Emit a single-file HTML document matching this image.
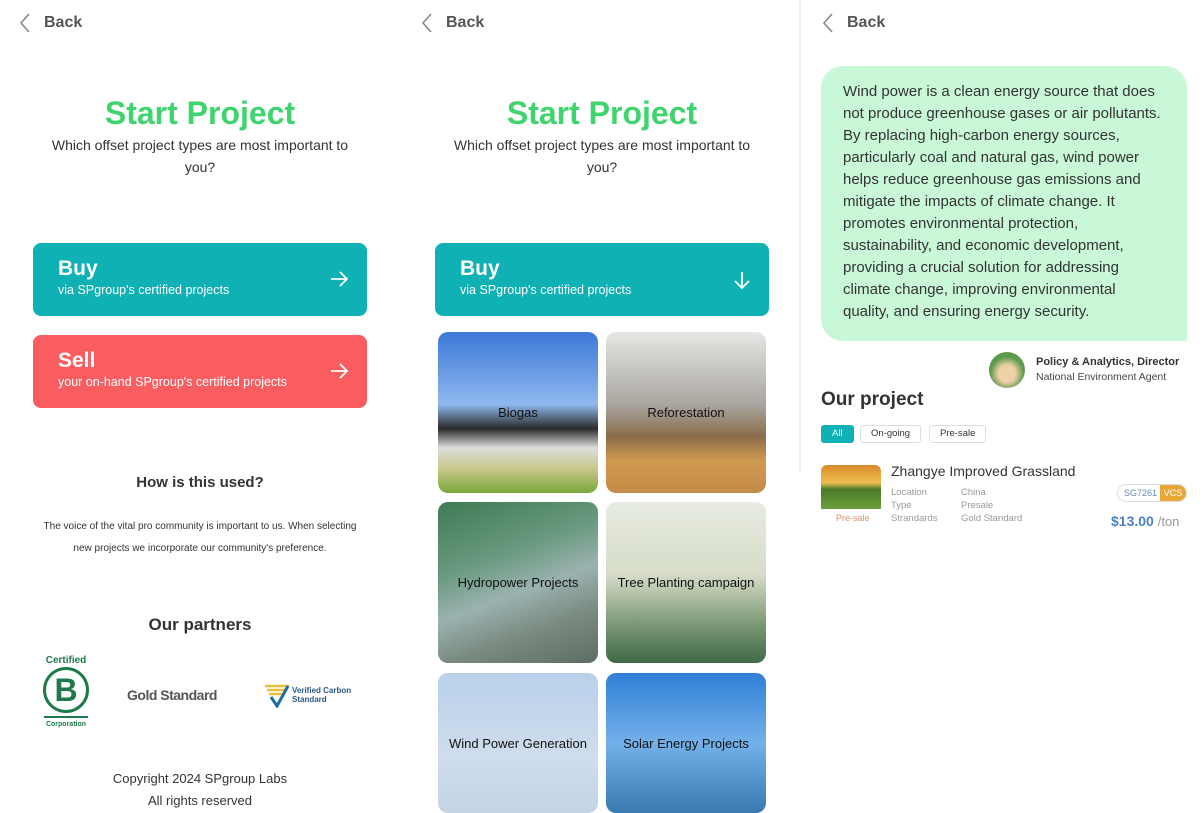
<!DOCTYPE html>
<html><head><meta charset="utf-8"><style>
*{margin:0;padding:0;box-sizing:border-box}
body{width:1204px;height:800px;overflow:hidden;background:#fff;font-family:"Liberation Sans",sans-serif;position:relative;color:#333}
.abs{position:absolute}
.back{position:absolute;top:14px;font-size:16px;color:#555;font-weight:bold}
.back svg{position:absolute;left:-26px;top:-2px}
h1{position:absolute;width:400px;text-align:center;top:95px;font-size:32px;color:#3fd46e;font-weight:bold}
.sub{position:absolute;width:330px;text-align:center;top:134px;font-size:14px;line-height:22px;color:#333}
.btn{position:absolute;left:33px;width:334px;height:73px;border-radius:8px;color:#fff;padding:14px 25px}
.btn b{font-size:21px;display:block}
.btn span{font-size:12.5px}
.btn .ar{position:absolute;right:18px;top:27px}
.tile{position:absolute;width:160px;height:161px;border-radius:10px;overflow:hidden;display:flex;align-items:center;justify-content:center;font-size:13px;color:#111}
.tag{position:absolute;top:425px;height:18px;border:1px solid #ddd;border-radius:3px;font-size:9.5px;line-height:16px;padding:0 10px;color:#333}
.meta{font-size:9.5px;color:#999;line-height:13px}
</style></head><body>
<!-- panel 1 -->
<div class="back" style="left:44px"><svg width="14" height="22" viewBox="0 0 14 22"><path d="M11 2L3 11l8 9" stroke="#888" stroke-width="1.6" fill="none"/></svg>Back</div>
<h1 style="left:0">Start Project</h1>
<div class="sub" style="left:35px">Which offset project types are most important to you?</div>
<div class="btn" style="top:243px;background:#0fb1b4"><b>Buy</b><span>via SPgroup's certified projects</span><svg class="ar" width="20" height="18" viewBox="0 0 20 18"><path d="M2 9h16M11 2l7 7-7 7" stroke="#fff" stroke-width="1.8" fill="none"/></svg></div>
<div class="btn" style="top:335px;background:#fa5d5f"><b>Sell</b><span>your on-hand SPgroup's certified projects</span><svg class="ar" width="20" height="18" viewBox="0 0 20 18"><path d="M2 9h16M11 2l7 7-7 7" stroke="#fff" stroke-width="1.8" fill="none"/></svg></div>
<div class="abs" style="left:0;width:400px;top:474px;text-align:center;font-size:15px;font-weight:bold;color:#333">How is this used?</div>
<div class="abs" style="left:38px;width:324px;top:516px;text-align:center;font-size:10px;line-height:22px;color:#333">The voice of the vital pro community is important to us. When selecting new projects we incorporate our community's preference.</div>
<div class="abs" style="left:0;width:400px;top:615px;text-align:center;font-size:17px;font-weight:bold;color:#333">Our partners</div>
<div class="abs" style="left:40px;top:655px;width:52px;text-align:center;color:#1e7a4a;font-weight:bold">
<div style="font-size:10px">Certified</div>
<div style="width:46px;height:46px;border:3px solid #1e7a4a;border-radius:50%;margin:1px auto;font-size:32px;line-height:40px">B</div>
<div style="height:2px;background:#1e7a4a;margin:3px 4px"></div>
<div style="font-size:7px">Corporation</div></div>
<div class="abs" style="left:127px;top:687px;font-size:14px;font-weight:bold;color:#555;letter-spacing:-.5px">Gold Standard</div>
<svg class="abs" style="left:264px;top:684px" width="26" height="24"><path d="M1 2h24M3 6h18M5 10h14" stroke="#e8c13a" stroke-width="2.5"/><path d="M7 13l6 9 11-20" stroke="#1a6fa0" stroke-width="3" fill="none"/></svg>
<div class="abs" style="left:292px;top:686px;font-size:8px;font-weight:bold;color:#2a5a85;line-height:9px">Verified Carbon<br>Standard</div>
<div class="abs" style="left:0;width:400px;top:768px;text-align:center;font-size:13px;line-height:22px;color:#333">Copyright 2024 SPgroup Labs<br>All rights reserved</div>

<!-- panel 2 -->
<div class="back" style="left:446px"><svg width="14" height="22" viewBox="0 0 14 22"><path d="M11 2L3 11l8 9" stroke="#888" stroke-width="1.6" fill="none"/></svg>Back</div>
<h1 style="left:402px">Start Project</h1>
<div class="sub" style="left:437px">Which offset project types are most important to you?</div>
<div class="btn" style="left:435px;top:243px;background:#0fb1b4"><b>Buy</b><span>via SPgroup's certified projects</span><svg class="ar" width="18" height="20" viewBox="0 0 18 20"><path d="M9 2v16M2 11l7 7 7-7" stroke="#fff" stroke-width="1.8" fill="none"/></svg></div>
<div class="tile" style="left:438px;top:332px;background:linear-gradient(#3c78d8 0%,#8fb8ee 45%,#2a2a2a 60%,#ddd 72%,#c8c88a 85%,#7aa63a 100%)">Biogas</div>
<div class="tile" style="left:606px;top:332px;background:linear-gradient(#e6e6e4 0%,#a9a6a0 45%,#8a6b4a 65%,#d09a50 80%,#c28c48 100%)">Reforestation</div>
<div class="tile" style="left:438px;top:502px;background:linear-gradient(160deg,#3f7a55 0%,#6a9a80 35%,#9bb2b0 55%,#7a8a80 75%,#5c6d60 100%)">Hydropower Projects</div>
<div class="tile" style="left:606px;top:502px;background:linear-gradient(#e8ece2 0%,#d6dcc8 45%,#7f9a78 75%,#3f6a48 100%)">Tree Planting campaign</div>
<div class="tile" style="left:438px;top:673px;height:140px;background:linear-gradient(#b8d0ea 0%,#cfdded 60%,#c4d4e4 100%)">Wind Power Generation</div>
<div class="tile" style="left:606px;top:673px;height:140px;background:linear-gradient(#2f7fd6 0%,#74b0ea 50%,#3a7ab0 100%)">Solar Energy Projects</div>

<!-- panel 3 -->
<div class="abs" style="left:799px;top:0;width:2px;height:472px;background:#f0f0f0"></div>
<div class="back" style="left:847px"><svg width="14" height="22" viewBox="0 0 14 22"><path d="M11 2L3 11l8 9" stroke="#888" stroke-width="1.6" fill="none"/></svg>Back</div>
<div class="abs" style="left:821px;top:66px;width:366px;height:275px;background:#c8f8d8;border-radius:22px 22px 0 22px;padding:15px 24px 15px 22px;font-size:15px;line-height:22px;color:#333">Wind power is a clean energy source that does not produce greenhouse gases or air pollutants. By replacing high-carbon energy sources, particularly coal and natural gas, wind power helps reduce greenhouse gas emissions and mitigate the impacts of climate change. It promotes environmental protection, sustainability, and economic development, providing a crucial solution for addressing climate change, improving environmental quality, and ensuring energy security.</div>
<div class="abs" style="left:989px;top:352px;width:36px;height:36px;border-radius:50%;background:radial-gradient(circle at 50% 60%,#f0d0a8 30%,#5a9a4a 60%)"></div>
<div class="abs" style="left:1036px;top:356px;font-size:11px;font-weight:bold;color:#333">Policy &amp; Analytics, Director</div>
<div class="abs" style="left:1036px;top:371px;font-size:10.5px;color:#444">National Environment Agent</div>
<div class="abs" style="left:821px;top:389px;font-size:19px;font-weight:bold;color:#333">Our project</div>
<div class="tag" style="left:821px;background:#0fb1b4;border-color:#0fb1b4;color:#fff;padding:0 10px">All</div>
<div class="tag" style="left:860px">On-going</div>
<div class="tag" style="left:929px">Pre-sale</div>
<div class="abs" style="left:821px;top:465px;width:60px;height:44px;border-radius:6px 6px 0 0;background:linear-gradient(#d88a2a 0%,#f0c050 40%,#4a7a2a 55%,#6aa03a 100%)"></div>
<div class="abs" style="left:836px;top:513px;font-size:9px;color:#e8906a">Pre-sale</div>
<div class="abs" style="left:891px;top:463px;font-size:14px;color:#333">Zhangye Improved Grassland</div>
<div class="abs meta" style="left:891px;top:486px">Location<br>Type<br>Strandards</div>
<div class="abs meta" style="left:961px;top:486px">China<br>Presale<br>Gold Standard</div>
<div class="abs" style="left:1117px;top:484px;width:70px;height:18px;border:1px solid #ddd;border-radius:9px;overflow:hidden;font-size:9px;line-height:16px;color:#6a8ab0"><span style="padding-left:6px">SG7261</span><span style="position:absolute;right:0;top:0;width:26px;height:16px;background:#e8a838;color:#fff;text-align:center">VCS</span></div>
<div class="abs" style="left:1111px;top:513px;font-size:14px;font-weight:bold;color:#4a80c8">$13.00 <span style="font-weight:normal;color:#999;font-size:13px">/ton</span></div>
</body></html>
